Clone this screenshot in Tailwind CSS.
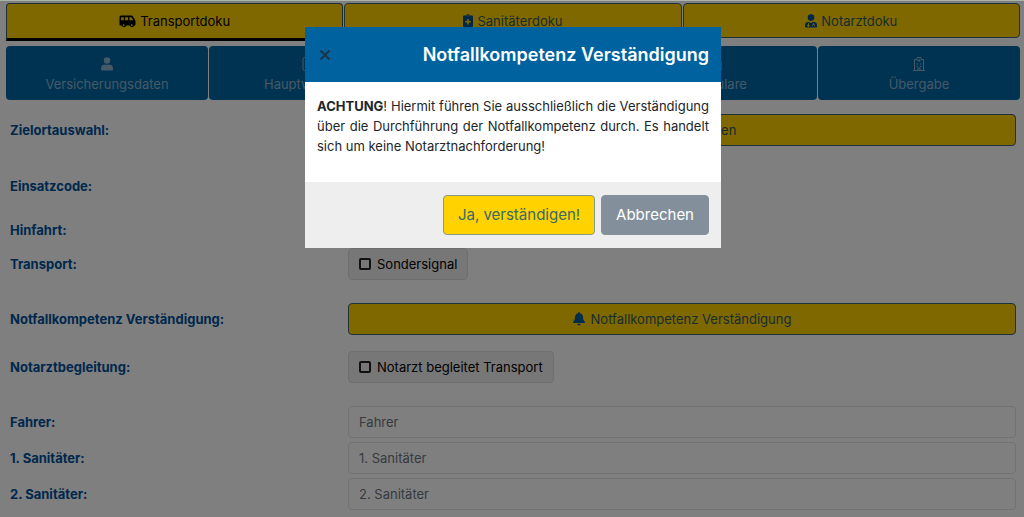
<!DOCTYPE html>
<html lang="de">
<head>
  <meta charset="UTF-8" />
  <meta name="viewport" content="width=device-width, initial-scale=1.0"/>
  <title>Transportdoku</title>
  <script src="https://cdn.jsdelivr.net/npm/@tailwindcss/browser@4"></script>
</head>
<body class="min-h-screen bg-white font-['Inter','Liberation_Sans',sans-serif] text-[13px] leading-5 text-[#212529]">
  <div class="pl-1.5 pr-1 pt-[3px]">
    <!-- Main tabs -->
    <nav class="grid h-[43px] grid-cols-3 items-start gap-px text-[#2f5a60]">
      <button type="button" class="flex h-[38px] items-center justify-center gap-1 rounded-t border border-b-3 border-[#3c5a64] border-b-black bg-[#ffd000] text-black">
        <svg class="h-4 w-[17px]" viewBox="0 0 16 16" fill="currentColor">
          <path fill-rule="evenodd" d="M1.500 2.500h10.500q.8 0 1.300.7l2.200 3.600q.5.800.5 1.700v3q0 1-1 1h-.4a2.200 2.200 0 0 1-4.300 0h-3.600a2.200 2.200 0 0 1-4.300 0H1q-1 0-1-1V4q0-1.500 1.500-1.500zM1.700 4.300v2.900h2.600V4.300zM5.600 4.300v2.900h3V4.300zM9.900 4.300v2.900h3.900L12 4.300zM4.500 11.200a.9.900 0 1 0 .1 1.700.9.900 0 0 0-.1-1.700zM12.400 11.200a.9.900 0 1 0 .1 1.700.9.900 0 0 0-.1-1.700z"/>
        </svg>
        Transportdoku
      </button>
      <button type="button" class="flex h-[35px] items-center justify-center gap-1 rounded border border-[#3c6478] bg-[#ffd000]">
        <svg class="h-3.5 w-2.5 text-[#00508c]" viewBox="0 0 10 14" fill="currentColor">
          <path fill-rule="evenodd" d="M1 1.500h2.200a1.900 1.900 0 0 1 3.600 0H9q1 0 1 1V12q0 1-1 1H1q-1 0-1-1V2.500q0-1 1-1zM5 1.200a.6.600 0 1 0 0 1.200.6.600 0 0 0 0-1.200zM4.200 5v2H2.200v1.600h2v2h1.600v-2h2V7h-2V5z"/>
        </svg>
        Sanitäterdoku
      </button>
      <button type="button" class="flex h-[35px] items-center justify-center gap-1 rounded border border-[#3c6478] bg-[#ffd000]">
        <svg class="h-3.5 w-3 text-[#00508c]" viewBox="0 0 12 14" fill="currentColor">
          <circle cx="6" cy="3.600" r="3.300"/>
          <path fill-rule="evenodd" d="M3.200 7.800 6 9l2.800-1.200Q12 8.300 12 11v1.700q0 .8-.8.800H.8q-.8 0-.8-.8V11q0-2.700 3.200-3.200zM3 9v1.500a1.100 1.100 0 1 0 .8 0V9zM8.200 9v1.200q-1.200.3-1.200 2h.7q0-1.300.9-1.300t.9 1.300h.7q0-1.700-1.300-2V9z"/>
        </svg>
        Notarztdoku
      </button>
    </nav>

    <!-- Sub tabs -->
    <nav class="grid grid-cols-5 gap-px text-[#8ab2cc]">
      <button type="button" class="flex h-[54px] flex-col items-center justify-center gap-0.5 rounded-sm bg-[#0067a5] pt-1">
        <svg class="h-4 w-3" viewBox="0 0 12 16" fill="currentColor">
          <circle cx="6" cy="4.500" r="3.200"/>
          <path d="M3.300 8.800h5.400Q12 9 12 12.500v1q0 1-1 1H1q-1 0-1-1v-1Q0 9 3.300 8.800z"/>
        </svg>
        Versicherungsdaten
      </button>
      <button type="button" class="flex h-[54px] flex-col items-center justify-center gap-0.5 rounded-sm bg-[#0067a5] pt-1">
        <svg class="h-4 w-4" viewBox="0 0 16 16" fill="none" stroke="currentColor">
          <rect x="1" y="1.500" width="14" height="13" rx="1.500"/>
          <path d="M4 5.500h8M4 8h8M4 10.500h5"/>
        </svg>
        Hauptwohnsitz
      </button>
      <button type="button" class="flex h-[54px] flex-col items-center justify-center gap-0.5 rounded-sm bg-[#0067a5] pt-1">
        <svg class="h-4 w-4" viewBox="0 0 16 16" fill="none" stroke="currentColor">
          <path d="M1 12V4h9v8zM10 6h3l2 3v3h-5z"/>
        </svg>
        Transport
      </button>
      <button type="button" class="flex h-[54px] flex-col items-center justify-center gap-0.5 rounded-sm bg-[#0067a5] pt-1">
        <svg class="h-4 w-3" viewBox="0 0 12 16" fill="none" stroke="currentColor">
          <path d="M1 1.500h6l4 4v9H1zM7 1.500v4h4"/>
        </svg>
        Formulare
      </button>
      <button type="button" class="flex h-[54px] flex-col items-center justify-center gap-0.5 rounded-sm bg-[#0067a5] pt-1">
        <svg class="h-4 w-3" viewBox="0 0 12 16" fill="none" stroke="currentColor">
          <path d="M0 14.500h12M1.500 14.500v-11H4v-2h4v2h2.500v11M5 14.500V12h2v2.500M6 3v3M4.500 4.500h3"/>
          <path d="M3.500 8h1.500M7 8h1.500M3.500 10.500h1.500M7 10.500h1.500"/>
        </svg>
        Übergabe
      </button>
    </nav>

    <!-- Transport form -->
    <form class="pt-3.5">
      <div class="mb-6 grid grid-cols-3 items-center">
        <label for="zielort" class="px-1 font-bold text-[#00509b]">Zielortauswahl:</label>
        <button id="zielort" type="button" class="col-span-2 mx-1 h-8 rounded border border-[#3c6478] bg-[#ffd000] text-[#2f5a60]">Zielort auswählen</button>
      </div>
      <div class="mb-3 flex h-8 items-center px-1 font-bold text-[#00509b]">Einsatzcode:</div>
      <div class="mb-0.5 flex h-8 items-center px-1 font-bold text-[#00509b]">Hinfahrt:</div>
      <div class="mb-[23px] grid grid-cols-3 items-center">
        <span class="px-1 font-bold text-[#00509b]">Transport:</span>
        <label class="col-span-2 mx-1 flex h-8 items-center gap-1.5 justify-self-start rounded-sm border border-[#dcdcdc] bg-[#efefef] px-2.5 text-black">
          <input type="checkbox" class="h-3 w-3 appearance-none rounded-xs border-2 border-[#222]"/>
          Sondersignal
        </label>
      </div>
      <div class="mb-4 grid grid-cols-3 items-center">
        <label for="notfall" class="px-1 font-bold text-[#00509b]">Notfallkompetenz Verständigung:</label>
        <button id="notfall" type="button" class="col-span-2 mx-1 flex h-8 items-center justify-center gap-1.5 rounded border border-[#3c6478] bg-[#ffd000] text-[#2f5a60]">
          <svg class="h-3.5 w-3 text-[#00589c]" viewBox="0 0 12 14" fill="currentColor">
            <path d="M6 0q.8 0 .8 1.200Q10 2 10 5.500q0 3 1.800 4.300.5 1.200-.6 1.200H.8q-1.100 0-.6-1.200Q2 8.500 2 5.500 2 2 5.200 1.200 5.200 0 6 0zM4.200 11.800h3.600Q7.600 13.500 6 13.500t-1.800-1.700z"/>
          </svg>
          Notfallkompetenz Verständigung
        </button>
      </div>
      <div class="mb-[23px] grid grid-cols-3 items-center">
        <span class="px-1 font-bold text-[#00509b]">Notarztbegleitung:</span>
        <label class="col-span-2 mx-1 flex h-8 items-center gap-1.5 justify-self-start rounded-sm border border-[#dcdcdc] bg-[#efefef] px-2.5 text-black">
          <input type="checkbox" class="h-3 w-3 appearance-none rounded-xs border-2 border-[#222]"/>
          Notarzt begleitet Transport
        </label>
      </div>
      <div class="grid grid-cols-3 items-center gap-y-1">
        <label for="fahrer" class="px-1 font-bold text-[#00509b]">Fahrer:</label>
        <input id="fahrer" type="text" placeholder="Fahrer" class="col-span-2 mx-1 h-8 rounded border border-[#e4e4e4] px-2.5 placeholder:text-[#6c757d]"/>
        <label for="sani1" class="px-1 font-bold text-[#00509b]">1. Sanitäter:</label>
        <input id="sani1" type="text" placeholder="1. Sanitäter" class="col-span-2 mx-1 h-8 rounded border border-[#e4e4e4] px-2.5 placeholder:text-[#6c757d]"/>
        <label for="sani2" class="px-1 font-bold text-[#00509b]">2. Sanitäter:</label>
        <input id="sani2" type="text" placeholder="2. Sanitäter" class="col-span-2 mx-1 h-8 rounded border border-[#e4e4e4] px-2.5 placeholder:text-[#6c757d]"/>
      </div>
    </form>
  </div>

  <!-- Confirm modal -->
  <div id="confirmModal" class="fixed inset-0 flex items-start justify-center border-t border-[#a9b4a8] bg-black/50 pl-1.5 pr-1 pt-[26px]">
    <div role="dialog" aria-labelledby="confirmTitle" class="w-full max-w-[416px] bg-white">
      <div class="flex h-[55px] items-center justify-between bg-[#0063a0] px-3">
        <button type="button" aria-label="Schließen" onclick="closeModal()" class="flex h-4 w-4 items-center justify-center text-[#1d3446]">
          <svg class="h-3 w-3" viewBox="0 0 12 12" fill="none" stroke="currentColor" stroke-width="2"><path d="M1.500 1.500l9 9M10.500 1.500l-9 9"/></svg>
        </button>
        <h2 id="confirmTitle" class="text-lg font-semibold text-white">Notfallkompetenz Verständigung</h2>
      </div>
      <p class="px-3 pb-[26px] pt-3.5 text-justify"><b>ACHTUNG</b>! Hiermit führen Sie ausschließlich die Verständigung über die Durchführung der Notfallkompetenz durch. Es handelt sich um keine Notarztnachforderung!</p>
      <div class="flex justify-end gap-1.5 bg-[#eeeeee] px-3 py-[13px]">
        <button type="button" onclick="closeModal()" class="h-10 rounded border border-[#8a9a80] bg-[#ffd200] px-3.5 text-[15px] text-[#3a6a6a]">Ja, verständigen!</button>
        <button type="button" onclick="closeModal()" class="h-10 rounded border border-[#83909b] bg-[#83909b] px-3.5 text-[15px] text-white">Abbrechen</button>
      </div>
    </div>
  </div>

  <script>
    function closeModal() {
      document.getElementById('confirmModal').classList.add('hidden');
    }
  </script>
</body>
</html>
